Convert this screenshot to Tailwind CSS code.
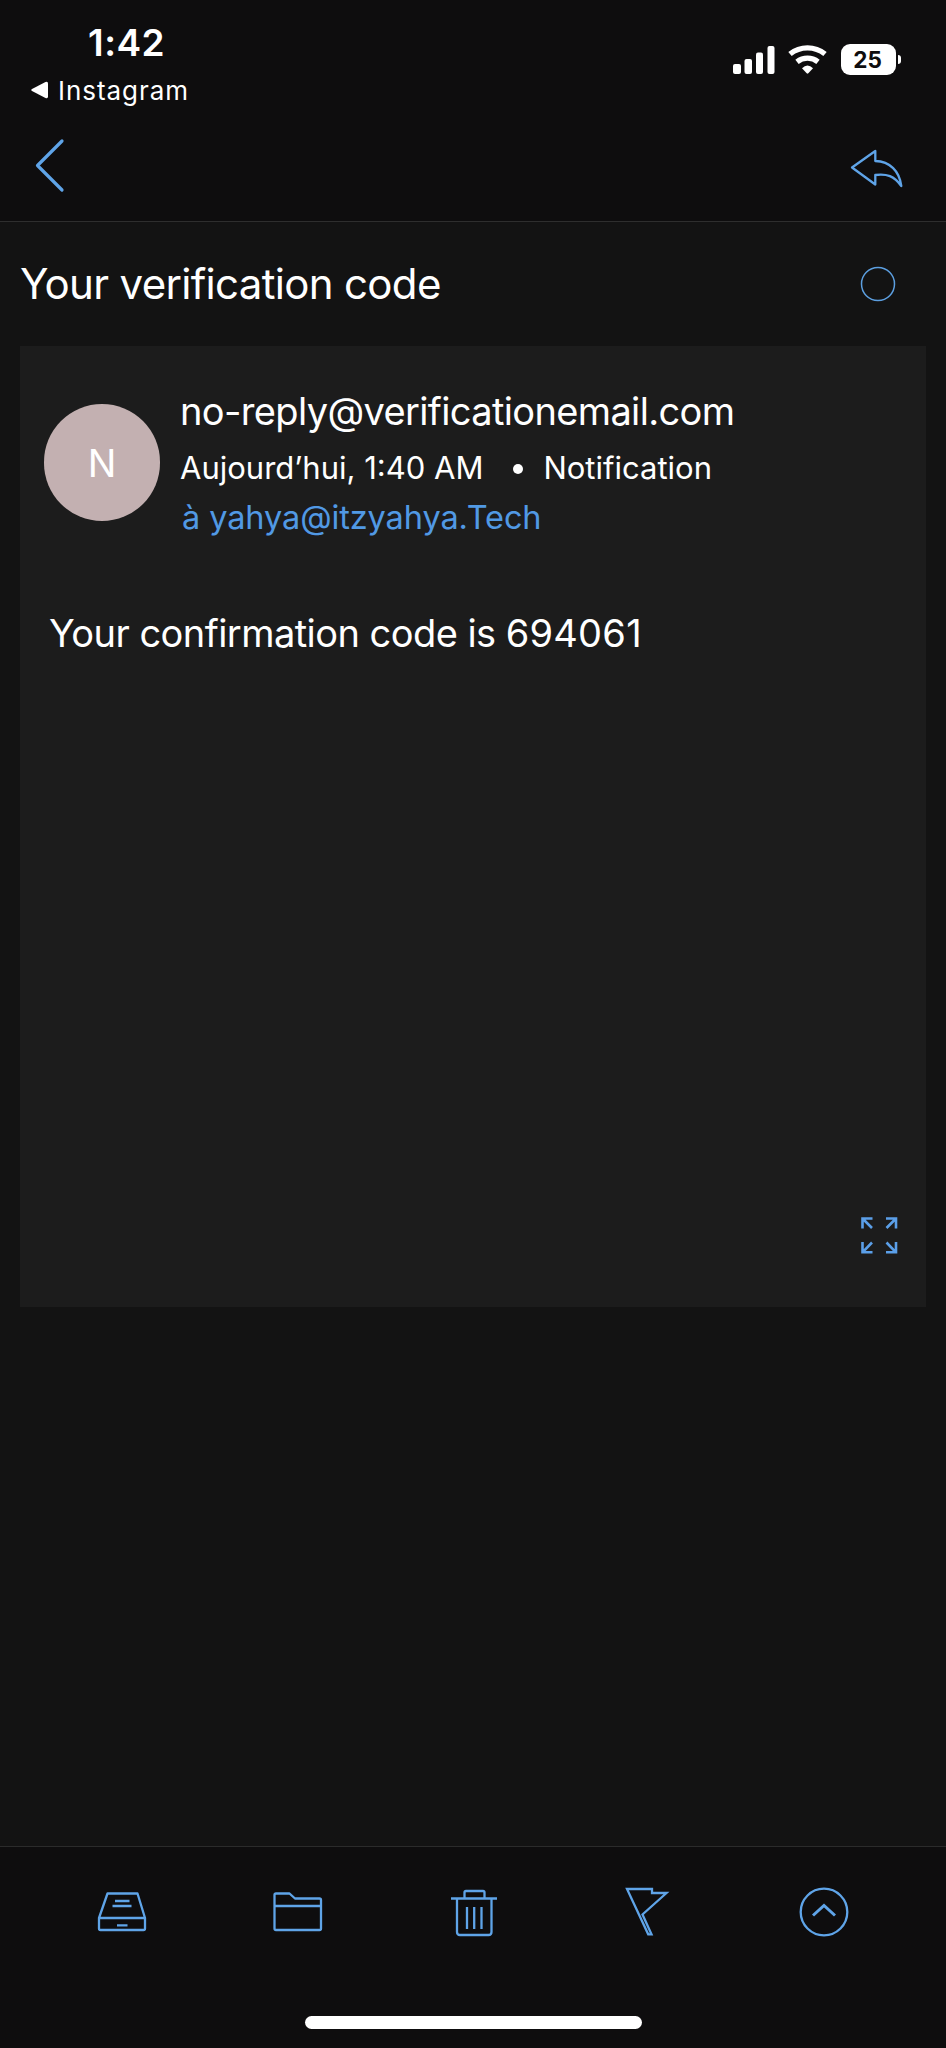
<!DOCTYPE html>
<html lang="fr">
<head>
<meta charset="utf-8">
<title>Your verification code</title>
<script src="https://cdn.jsdelivr.net/npm/@tailwindcss/browser@4"></script>
</head>
<body class="bg-[#131313] text-white font-['Inter','Liberation_Sans',sans-serif]">
<div class="flex flex-col w-[946px] h-[2048px] overflow-hidden whitespace-nowrap">
  <header class="h-[222px] bg-[#0e0d0e] border-b border-[#2e2e2e] flex flex-col">
    <div class="flex justify-between h-[114px]">
      <div class="pl-[31px] pt-[20px]">
        <div class="pl-[57px] h-[46px] leading-[46px] text-[37px] font-semibold tracking-[0.5px]">1:42</div>
        <div class="flex items-center h-[48px] text-[26px] tracking-[0.95px]">
          <svg class="w-[18px] h-[18px] mr-[9px]" viewBox="0 0 18 18" fill="#fff"><path d="M1 8 14.500 1Q17 0 17 2.500V15.500Q17 18 14.500 17L1 10Q-.5 9 1 8Z"/></svg>
          <span>Instagram</span>
        </div>
      </div>
      <div class="flex items-start pt-[44px] pr-[45px]">
        <svg class="w-[42px] h-[30px] mr-[12px]" viewBox="0 0 42 30" fill="#fff"><rect x="0" y="20" width="8" height="10" rx="2"/><rect x="11.500" y="15" width="7.500" height="15" rx="2"/><rect x="23" y="8.500" width="7" height="21.500" rx="2"/><rect x="34.500" y="2" width="7" height="28" rx="2"/></svg>
        <svg class="w-[42px] h-[30px] mr-[12px]" viewBox="0 0 42 30" fill="none" stroke="#fff" stroke-width="5.400"><path d="M3 10A28 28 0 0 1 38 10"/><path d="M10 17.800A17 17 0 0 1 31 17.800"/><path d="M15 24.200Q20.500 19 26 24.200L21.300 29.300Q20.500 30 19.700 29.300Z" fill="#fff" stroke="none"/></svg>
        <div class="flex items-center">
          <div class="w-[55px] h-[31px] rounded-[9px] bg-white text-[#0e0d0e] text-[22.500px] font-bold flex items-center justify-center pr-[2px]">25</div>
          <div class="ml-[2px] w-[3px] h-[9px] rounded-r-[3px] bg-white"></div>
        </div>
      </div>
    </div>
    <div class="flex justify-between pl-[34px] pr-[42px] pt-[24px]">
      <svg class="w-[32px] h-[56px]" viewBox="34 138 32 56" fill="none" stroke="#5fa4e8" stroke-width="3.200" stroke-linecap="round" stroke-linejoin="round"><path d="M62 141 37.500 165.500 62 190"/></svg>
      <svg class="w-[56px] h-[46px] mt-[8px]" viewBox="848 146 56 46" fill="none" stroke="#5fa4e8" stroke-width="2.300" stroke-linejoin="round"><path d="M875.300 151V161C890 161.500 899.500 171 901.300 186C894 176 887 173.500 875.300 175V184.500L852 167.500Z"/></svg>
    </div>
  </header>

  <main class="h-[1624px] px-[20px]">
    <div class="flex items-center justify-between h-[124px] pr-[31px]">
      <h1 class="text-[42px] tracking-[-0.68px] pb-[2px]">Your verification code</h1>
      <svg class="w-[36px] h-[36px] -mr-px" viewBox="0 0 36 36" fill="none" stroke="#5c9fe0" stroke-width="1.500"><circle cx="18" cy="18" r="16.500"/></svg>
    </div>
    <section class="w-[906px] h-[961px] bg-[#1c1c1c] flex flex-col justify-between">
      <div>
        <div class="flex pl-[24px] pt-[37px]">
          <div class="w-[116px] h-[117px] mt-[21px] rounded-full bg-[#c3b0b1] flex items-center justify-center text-[38px] pt-[2px]">N</div>
          <div class="ml-[20px]">
            <div class="h-[57px] leading-[57px] text-[38px] tracking-[-0.64px]">no-reply@verificationemail.com</div>
            <div class="h-[57px] flex items-center text-[31px]">
              <span>Aujourd’hui, 1:40 AM</span>
              <i class="w-[10px] h-[10px] ml-[30px] mr-[20px] rounded-full bg-white"></i>
              <span>Notification</span>
            </div>
            <div class="pl-[2px] h-[42px] leading-[42px] text-[32.500px] tracking-[-0.1px] text-[#5199e4]">à yahya@itzyahya.Tech</div>
          </div>
        </div>
        <p class="pl-[29px] mt-[70px] h-[48px] leading-[48px] text-[38px] tracking-[-0.55px]">Your confirmation code is <span class="tracking-[0.25px]">694061</span></p>
      </div>
      <svg class="self-end w-[38px] h-[38px] mr-[28px] mb-[53px]" viewBox="860 1216 38 38" fill="none" stroke="#5b9fe8" stroke-width="2.600"><path d="M872.500 1218.500H862.500V1228.500M862.500 1218.500 872 1228M886 1218.500H896V1228.500M896 1218.500 886.500 1228M872.500 1252.300H862.500V1242M862.500 1252.300 872 1242.500M886 1252.300H896V1242M896 1252.300 886.500 1242.500"/></svg>
    </section>
  </main>

  <footer class="flex-1 bg-[#0e0d0e] border-t border-[#2b2b2b] flex flex-col items-center">
    <div class="flex w-full h-[169px] pt-[37px] pl-[94px] gap-[119px]">
      <svg class="w-[56px] h-[56px]" viewBox="94 1884 56 56" fill="none" stroke="#5fa4e8" stroke-width="2.300" stroke-linejoin="round"><path d="M107.500 1893.500H137.500L145 1918V1928.500Q145 1930 143.500 1930H100.500Q99 1930 99 1928.500V1918ZM99 1918H145M115 1901H129.500M112.500 1906H131.500M117 1925.300H127.500"/></svg>
      <svg class="w-[56px] h-[56px]" viewBox="269 1884 56 56" fill="none" stroke="#5fa4e8" stroke-width="2.300" stroke-linejoin="round"><path d="M274.500 1895Q274.500 1893.500 276 1893.500H289.500L295 1898.500H319.500Q321 1898.500 321 1900V1928.500Q321 1930 319.500 1930H276Q274.500 1930 274.500 1928.500ZM274.500 1906H321"/></svg>
      <svg class="w-[56px] h-[56px]" viewBox="444 1884 56 56" fill="none" stroke="#5fa4e8" stroke-width="2.300" stroke-linejoin="round"><path d="M451 1898.500H497M464.500 1898.500V1892.500Q464.500 1891 466 1891H483Q484.500 1891 484.500 1892.500V1898.500M457 1898.500V1932Q457 1935 460 1935H488.500Q491.500 1935 491.500 1932V1898.500M467 1907V1929M474.200 1907V1929M481.500 1907V1929"/></svg>
      <svg class="w-[56px] h-[56px]" viewBox="619 1884 56 56" fill="none" stroke="#5fa4e8" stroke-width="2.300"><path d="M627 1889H652V1893H666.500L642.500 1914.500L651.500 1934.300H648.200Z"/></svg>
      <svg class="w-[56px] h-[56px]" viewBox="794 1884 56 56" fill="none" stroke="#5fa4e8" stroke-width="2.300"><circle cx="824" cy="1912" r="23.300"/><path d="M813 1915.500 824 1905.500 835 1915.500" stroke-width="3"/></svg>
    </div>
    <div class="w-[337px] h-[13px] rounded-full bg-white"></div>
  </footer>
</div>
</body>
</html>
